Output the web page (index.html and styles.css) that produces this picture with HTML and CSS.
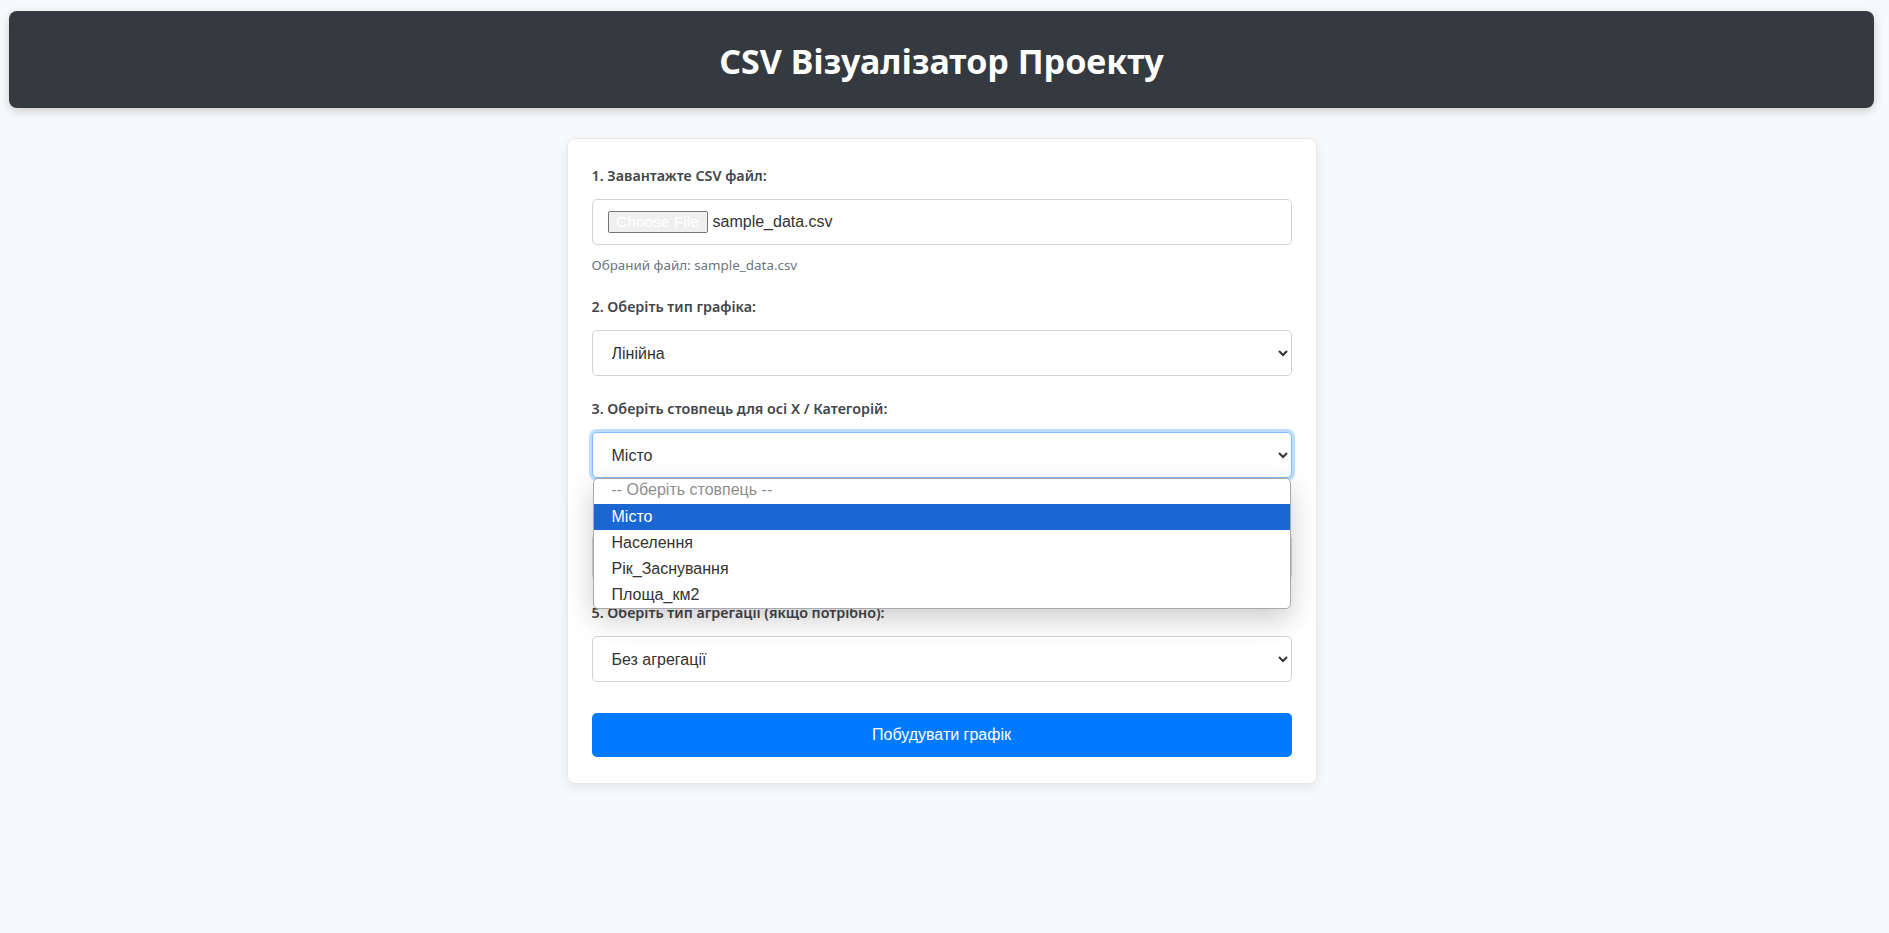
FILE: index.html
```html
<!DOCTYPE html>
<html lang="uk">
<head>
<meta charset="utf-8">
<title>CSV Візуалізатор Проекту</title>
<link rel="stylesheet" href="styles.css">
</head>
<body>
<div class="page">
  <header class="app-header">
    <h1 class="app-title">CSV Візуалізатор Проекту</h1>
  </header>
  <main class="card">
    <div class="group group-file">
      <label class="label">1. Завантажте CSV файл:</label>
      <div class="file-input">
        <span class="file-btn">Choose File</span>
        <span class="file-name">sample_data.csv</span>
      </div>
      <div class="helper">Обраний файл: sample_data.csv</div>
    </div>
    <div class="group">
      <label class="label" for="chart">2. Оберіть тип графіка:</label>
      <select class="select" id="chart"><option>Лінійна</option></select>
    </div>
    <div class="group group-open">
      <label class="label" for="xcol">3. Оберіть стовпець для осі X / Категорій:</label>
      <select class="select select-focus" id="xcol"><option>Місто</option></select>
      <ul class="dropdown">
        <li class="opt opt-placeholder">-- Оберіть стовпець --</li>
        <li class="opt opt-active">Місто</li>
        <li class="opt">Населення</li>
        <li class="opt">Рік_Заснування</li>
        <li class="opt">Площа_км2</li>
      </ul>
    </div>
    <div class="group group-under">
      <label class="label" for="ycol">4. Оберіть стовпець для осі Y / Значень:</label>
      <select class="select" id="ycol"><option>Населення</option></select>
    </div>
    <div class="group">
      <label class="label" for="agg">5. Оберіть тип агрегації (якщо потрібно):</label>
      <select class="select" id="agg"><option>Без агрегації</option></select>
    </div>
    <button class="btn" type="button">Побудувати графік</button>
  </main>
</div>
</body>
</html>
```
FILE: styles.css
```css
* { box-sizing: border-box; }
html, body { margin: 0; padding: 0; }
body {
  background: #f8f9fa;
  font-family: "Noto Sans", "Open Sans", sans-serif;
  color: #333;
  min-height: 933px;
}
.page {
  padding: 11px 15px 40px 9px;
}
.app-header {
  background: #343a40;
  border-radius: 8px;
  height: 97px;
  display: flex;
  align-items: center;
  justify-content: center;
  box-shadow: 0 3px 10px rgba(0,0,0,0.18);
}
.app-title {
  margin: 0;
  color: #fff;
  font-size: 34px;
  font-weight: 700;
  line-height: 1;
  padding-top: 2px;
}
.card {
  width: 750px;
  margin: 30px auto 0;
  background: #fff;
  border: 1px solid #e6e8ea;
  border-radius: 8px;
  padding: 27px 24px 26px;
  box-shadow: 0 4px 12px rgba(0,0,0,0.08);
}
.group {
  position: relative;
  margin-bottom: 23px;
}
.label {
  display: block;
  font-size: 14.3px;
  font-weight: 600;
  line-height: 20px;
  margin-bottom: 13px;
  color: #41464b;
}
.group-under .label { visibility: hidden; }
.file-input {
  height: 46px;
  border: 1px solid #ced4da;
  border-radius: 5px;
  display: flex;
  align-items: center;
  padding: 0 15px;
  font-family: "Liberation Sans", Arial, sans-serif;
  font-size: 16px;
  color: #333;
}
.file-btn {
  display: inline-block;
  width: 100px;
  height: 22px;
  line-height: 20px;
  text-align: center;
  background: #efefef;
  border: 1px solid #767676;
  border-radius: 2px;
  color: #ffffff;
  font-size: 15.5px;
  margin-right: 5px;
}
.helper {
  margin-top: 11px;
  font-size: 13.4px;
  line-height: 18px;
  color: #6c757d;
}
.select {
  display: block;
  width: 100%;
  height: 46px;
  border: 1px solid #ced4da;
  border-radius: 5px;
  background: #fff;
  padding: 0 15px;
  font-family: "Liberation Sans", Arial, sans-serif;
  font-size: 16px;
  color: #333;
  outline: none;
}
.select-focus {
  border-color: #80bdff;
  box-shadow: 0 0 0 3px rgba(0,123,255,0.25);
}
.dropdown {
  position: absolute;
  top: 100%;
  left: 1px;
  right: 1px;
  margin: 0;
  padding: 0;
  list-style: none;
  background: #fff;
  border: 1px solid #a9a9a9;
  border-radius: 5px;
  box-shadow: 0 10px 28px rgba(0,0,0,0.2);
  z-index: 10;
  overflow: hidden;
  font-family: "Liberation Sans", Arial, sans-serif;
  font-size: 16px;
  color: #333;
}
.opt {
  height: 26px;
  line-height: 25px;
  padding: 0 18px;
}
.opt:first-child { height: 25px; line-height: 22px; }
.opt-placeholder { color: #8e8e8e; }
.opt-active {
  background: #1967d2;
  color: #fff;
}
.btn {
  display: block;
  width: 100%;
  height: 44px;
  margin-top: 31px;
  border: 0;
  border-radius: 5px;
  background: #007bff;
  color: #fff;
  font-family: "Liberation Sans", Arial, sans-serif;
  font-size: 16px;
  cursor: pointer;
}
```
